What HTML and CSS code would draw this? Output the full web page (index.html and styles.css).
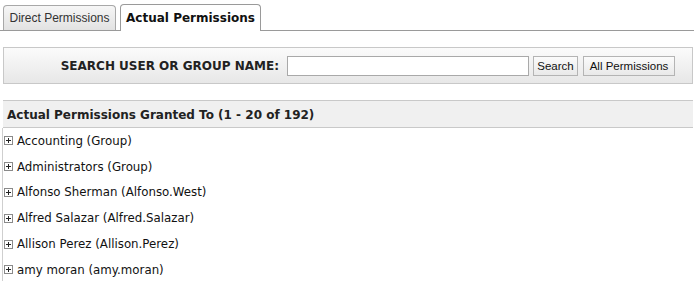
FILE: index.html
```html
<!DOCTYPE html>
<html>
<head>
<meta charset="utf-8">
<link rel="stylesheet" href="styles.css">
</head>
<body>
<div class="tabs">
  <div class="tab">Direct Permissions</div>
  <div class="tab active">Actual Permissions</div>
</div>
<div class="panel">
  <span class="label">SEARCH USER OR GROUP NAME:</span>
  <input class="field" type="text">
  <button class="btn btn-search">Search</button>
  <button class="btn btn-all">All Permissions</button>
</div>
<div class="header">Actual Permissions Granted To (1 - 20 of 192)</div>
<ul class="list">
  <li class="row"><span class="plus"></span>Accounting (Group)</li>
  <li class="row"><span class="plus"></span>Administrators (Group)</li>
  <li class="row"><span class="plus"></span>Alfonso Sherman (Alfonso.West)</li>
  <li class="row"><span class="plus"></span>Alfred Salazar (Alfred.Salazar)</li>
  <li class="row"><span class="plus"></span>Allison Perez (Allison.Perez)</li>
  <li class="row"><span class="plus"></span>amy moran (amy.moran)</li>
</ul>
</body>
</html>
```

FILE: styles.css
```css
html, body {
  margin: 0;
  padding: 0;
  background: #fff;
  font-family: "DejaVu Sans", Verdana, sans-serif;
  color: #111;
  overflow: hidden;
}

.tabs {
  display: flex;
  align-items: flex-end;
  gap: 4px;
  padding: 4px 0 0 3px;
  height: 26px;
  border-bottom: 1px solid #9a9a9a;
}

.tab {
  box-sizing: border-box;
  height: 25px;
  width: 113px;
  border: 1px solid #a8a8a8;
  border-bottom: none;
  border-radius: 4px 4px 0 0;
  background: linear-gradient(#f6f6f6, #e2e2e2);
  font-family: "Liberation Sans", Arial, sans-serif;
  font-size: 12px;
  color: #333;
  display: flex;
  align-items: center;
  justify-content: center;
}

.tab.active {
  height: 27px;
  width: 141px;
  margin-bottom: -1px;
  background: #fff;
  border-color: #9a9a9a;
  font-family: "DejaVu Sans", Verdana, sans-serif;
  font-weight: bold;
  font-size: 12px;
  color: #111;
}

.panel {
  box-sizing: border-box;
  margin: 16px 1px 0 3px;
  height: 37px;
  border: 1px solid #c8c8c8;
  background: linear-gradient(#fbfbfb, #e7e7e7);
  display: flex;
  align-items: center;
  justify-content: flex-end;
  padding-right: 17px;
  padding-top: 1px;
}

.label {
  font-weight: bold;
  font-size: 12px;
  color: #222;
  margin-right: 8px;
}

.field {
  box-sizing: border-box;
  width: 242px;
  height: 20px;
  margin: 0 4px 0 0;
  border: 1px solid #a9a9a9;
  background: #fff;
  padding: 0;
}

.btn {
  box-sizing: border-box;
  height: 20px;
  padding: 0;
  margin: 0;
  border: 1px solid #b4b4b4;
  background: linear-gradient(#fbfbfb, #e9e9e9);
  font-family: "Liberation Sans", Arial, sans-serif;
  font-size: 11.5px;
  color: #111;
}

.btn-search {
  width: 45px;
  margin-right: 5px;
}

.btn-all {
  width: 92px;
}

.header {
  box-sizing: border-box;
  margin: 16px 1px 0 3px;
  height: 28px;
  border-top: 1px solid #c9c9c9;
  border-bottom: 1px solid #c9c9c9;
  background: #f0f0f0;
  font-weight: bold;
  font-size: 12px;
  color: #222;
  padding-left: 4px;
  padding-top: 1px;
  display: flex;
  align-items: center;
}

.list {
  list-style: none;
  margin: 0 0 0 2px;
  padding: 0;
  border-left: 1px solid #cfcfcf;
}

.row {
  height: 25.8px;
  display: flex;
  align-items: center;
  font-size: 11.8px;
  color: #111;
  padding-left: 1px;
}

.plus {
  box-sizing: border-box;
  position: relative;
  width: 9px;
  height: 9px;
  border: 1px solid #8a8a8a;
  margin-right: 4px;
  flex: none;
}

.plus::before,
.plus::after {
  content: "";
  position: absolute;
  background: #222;
}

.plus::before {
  left: 1px;
  top: 3px;
  width: 5px;
  height: 1px;
}

.plus::after {
  left: 3px;
  top: 1px;
  width: 1px;
  height: 5px;
}
```
